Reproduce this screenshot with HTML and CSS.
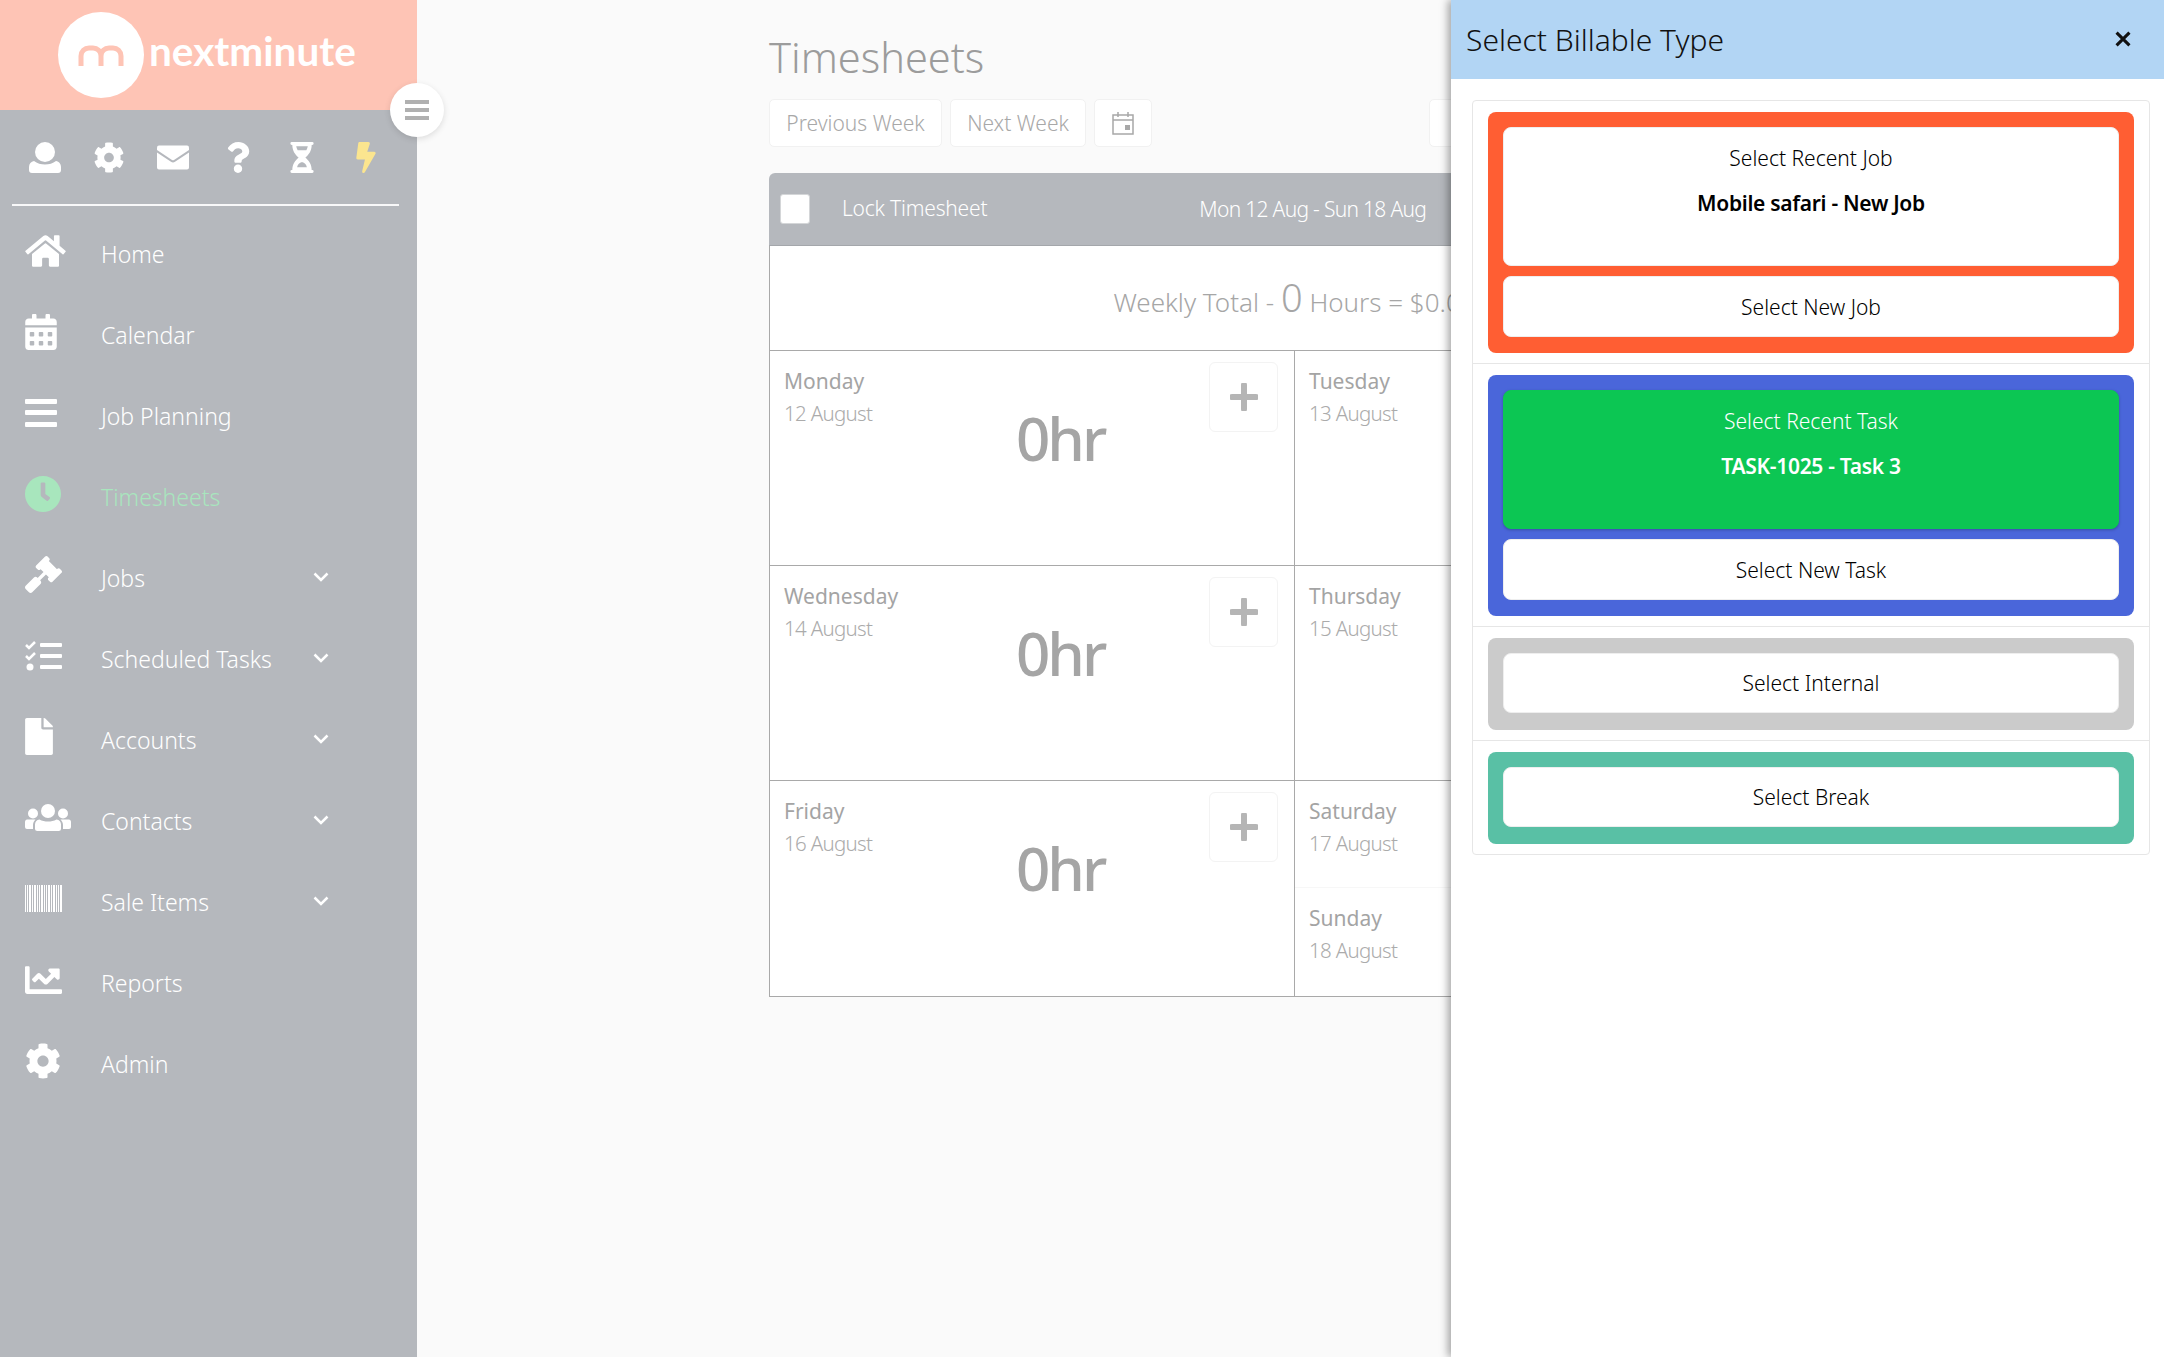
FILE: index.html
```html
<!DOCTYPE html>
<html lang="en">
<head>
<meta charset="utf-8">
<title>Timesheets</title>
<link rel="stylesheet" href="styles.css">
</head>
<body>
<aside class="sidebar">
  <div class="brand">
    <div class="brand-disc">
      <svg class="brand-mark" viewBox="0 0 46 22"><path d="M3 22V12a8 8 0 0 1 8-8h4a8 8 0 0 1 8 8v10M23 22V12a8 8 0 0 1 8-8h4a8 8 0 0 1 8 8v10" fill="none"/></svg>
    </div>
    <span class="brand-name">nextminute</span>
  </div>
  <button class="toggle" aria-label="Toggle menu"><svg viewBox="0 0 24 21"><rect width="24" height="4" y="0"/><rect width="24" height="4" y="8"/><rect width="24" height="4" y="16"/></svg></button>
  <div class="quick">
    <svg class="q q-user" viewBox="0 0 32 31"><circle cx="16" cy="10" r="10"/><path d="M5 19c3 2.500 7 3.500 11 3.500s8-1 11-3.500c3 .5 5 3 5 6v3a3 3 0 0 1-3 3H3a3 3 0 0 1-3-3v-3c0-3 2-5.500 5-6z"/></svg>
    <svg class="q q-cog" viewBox="0 0 512 512"><path d="M487.400 315.700l-42.600-24.600c4.300-23.200 4.300-47 0-70.200l42.600-24.600c4.900-2.800 7.100-8.600 5.500-14-11.100-35.600-30-67.800-54.700-94.600-3.800-4.100-10-5.100-14.800-2.300L380.800 110c-17.900-15.400-38.500-27.300-60.800-35.100V25.800c0-5.600-3.900-10.500-9.400-11.700-36.700-8.200-74.300-7.800-109.200 0-5.500 1.200-9.400 6.100-9.400 11.700V75c-22.200 7.900-42.800 19.800-60.800 35.100L88.700 85.500c-4.900-2.800-11-1.900-14.800 2.300-24.700 26.700-43.600 58.900-54.700 94.600-1.700 5.400.6 11.200 5.500 14L67.300 221c-4.300 23.200-4.300 47 0 70.200l-42.600 24.600c-4.900 2.800-7.100 8.600-5.500 14 11.100 35.600 30 67.800 54.700 94.600 3.800 4.100 10 5.100 14.800 2.300l42.600-24.600c17.900 15.400 38.500 27.300 60.800 35.100v49.200c0 5.600 3.900 10.500 9.400 11.700 36.700 8.200 74.300 7.800 109.200 0 5.500-1.200 9.400-6.100 9.400-11.700v-49.200c22.200-7.900 42.800-19.800 60.800-35.100l42.600 24.600c4.900 2.800 11 1.900 14.800-2.300 24.700-26.700 43.600-58.900 54.700-94.600 1.500-5.500-.7-11.300-5.600-14.100zM256 336c-44.100 0-80-35.900-80-80s35.900-80 80-80 80 35.900 80 80-35.900 80-80 80z"/></svg>
    <svg class="q q-mail" viewBox="0 0 32 24"><path d="M2 0h28a2 2 0 0 1 2 2v2.500L17 14.500a2 2 0 0 1-2 0L0 4.500V2a2 2 0 0 1 2-2z"/><path d="M0 7l14 9.300a4 4 0 0 0 4 0L32 7v15a2 2 0 0 1-2 2H2a2 2 0 0 1-2-2z"/></svg>
    <svg class="q q-help" viewBox="0 0 384 512"><path d="M202.021 0C122.202 0 70.503 32.703 29.914 91.026c-7.363 10.580-5.093 25.086 5.178 32.874l43.138 32.709c10.373 7.865 25.132 6.026 33.253-4.148 25.049-31.381 43.630-49.449 82.757-49.449 30.764 0 68.816 19.799 68.816 49.631 0 22.552-18.617 34.134-48.993 51.164-35.423 19.860-82.299 44.576-82.299 106.405V320c0 13.255 10.745 24 24 24h72.471c13.255 0 24-10.745 24-24v-5.773c0-42.860 125.268-44.645 125.268-160.627C377.504 66.256 286.902 0 202.021 0zM192 373.459c-38.196 0-69.271 31.075-69.271 69.271 0 38.195 31.075 69.270 69.271 69.270s69.271-31.075 69.271-69.271-31.075-69.270-69.271-69.270z"/></svg>
    <svg class="q q-glass" viewBox="0 0 24 32"><path fill-rule="evenodd" d="M1.500 0h21a1.500 1.500 0 0 1 0 3H22c0 6-3 10-6.500 13 3.500 3 6.500 7 6.500 13h.5a1.500 1.500 0 0 1 0 3h-21a1.500 1.500 0 0 1 0-3H2c0-6 3-10 6.500-13C5 13 2 9 2 3h-.5a1.500 1.500 0 0 1 0-3zM6 4.500c.3 1.500.8 2.800 1.500 4h9c.7-1.200 1.200-2.500 1.500-4zM12 21c-2.500 0-4.500 2.500-5 5h10c-.5-2.500-2.500-5-5-5z"/></svg>
    <svg class="q q-bolt" viewBox="0 0 320 512"><path d="M296 160H180.600l42.600-129.800C227.200 15 215.700 0 200 0H56C44 0 33.800 8.900 32.200 20.800l-32 240C-1.700 275.200 9.500 288 24 288h118.700L96.600 482.500c-3.600 15.200 8 29.500 23.300 29.500 8.400 0 16.400-4.400 20.800-12l176-304c9.300-15.900-2.200-36-20.700-36z"/></svg>
  </div>
  <hr class="rule">
  <nav class="nav">
    <a class="item"><span class="ico"><svg class="i-home" viewBox="0 0 576 512"><path d="M280.370 148.260L96 300.110V464a16 16 0 0 0 16 16l112.060-.29a16 16 0 0 0 15.920-16V368a16 16 0 0 1 16-16h64a16 16 0 0 1 16 16v95.640a16 16 0 0 0 16 16.050L464 480a16 16 0 0 0 16-16V300L295.670 148.260a12.190 12.190 0 0 0-15.300 0zM571.600 251.470L488 182.560V44.050a12 12 0 0 0-12-12h-56a12 12 0 0 0-12 12v72.610L318.470 43a48 48 0 0 0-61 0L4.340 251.470a12 12 0 0 0-1.600 16.900l25.500 31A12 12 0 0 0 45.150 301l235.220-193.740a12.190 12.190 0 0 1 15.300 0L530.900 301a12 12 0 0 0 16.900-1.600l25.500-31a12 12 0 0 0-1.700-16.930z"/></svg></span>Home</a>
    <a class="item"><span class="ico"><svg class="i-cal" viewBox="0 0 448 512"><path d="M0 464c0 26.500 21.500 48 48 48h352c26.500 0 48-21.500 48-48V192H0v272zm320-196c0-6.600 5.400-12 12-12h40c6.600 0 12 5.400 12 12v40c0 6.600-5.400 12-12 12h-40c-6.600 0-12-5.400-12-12v-40zm0 128c0-6.600 5.400-12 12-12h40c6.600 0 12 5.400 12 12v40c0 6.600-5.400 12-12 12h-40c-6.600 0-12-5.400-12-12v-40zM192 268c0-6.600 5.400-12 12-12h40c6.600 0 12 5.400 12 12v40c0 6.600-5.400 12-12 12h-40c-6.600 0-12-5.400-12-12v-40zm0 128c0-6.600 5.400-12 12-12h40c6.600 0 12 5.400 12 12v40c0 6.600-5.400 12-12 12h-40c-6.600 0-12-5.400-12-12v-40zM64 268c0-6.600 5.400-12 12-12h40c6.600 0 12 5.400 12 12v40c0 6.600-5.400 12-12 12H76c-6.600 0-12-5.400-12-12v-40zm0 128c0-6.600 5.400-12 12-12h40c6.600 0 12 5.400 12 12v40c0 6.600-5.400 12-12 12H76c-6.600 0-12-5.400-12-12v-40zM400 64h-48V16c0-8.800-7.200-16-16-16h-32c-8.800 0-16 7.200-16 16v48H160V16c0-8.800-7.200-16-16-16h-32c-8.800 0-16 7.200-16 16v48H48C21.500 64 0 85.500 0 112v48h448v-48c0-26.500-21.500-48-48-48z"/></svg></span>Calendar</a>
    <a class="item"><span class="ico"><svg class="i-bars" viewBox="0 0 32 28"><rect width="32" height="5" rx="1" y="0"/><rect width="32" height="5" rx="1" y="11"/><rect width="32" height="5" rx="1" y="23"/></svg></span>Job Planning</a>
    <a class="item item-active"><span class="ico"><svg class="i-clock" viewBox="8 8 496 496"><path d="M256 8C119 8 8 119 8 256s111 248 248 248 248-111 248-248S393 8 256 8zm92.490 313l-20 25a16 16 0 0 1-22.490 2.500l-67-49.720a40 40 0 0 1-15-31.230V112a16 16 0 0 1 16-16h32a16 16 0 0 1 16 16v144l58 42.500a16 16 0 0 1 2.490 22.500z"/></svg></span>Timesheets</a>
    <a class="item"><span class="ico"><svg class="i-gavel" viewBox="0 0 512 512"><path d="M504.971 199.362l-22.627-22.627c-9.373-9.373-24.569-9.373-33.941 0l-5.657 5.657L329.608 69.255l5.657-5.657c9.373-9.373 9.373-24.569 0-33.941L312.638 7.029c-9.373-9.373-24.569-9.373-33.941 0L154.246 131.480c-9.373 9.373-9.373 24.569 0 33.941l22.627 22.627c9.373 9.373 24.569 9.373 33.941 0l5.657-5.657 39.598 39.598-81.040 81.040-5.657-5.657c-12.497-12.497-32.758-12.497-45.255 0L9.373 412.118c-12.497 12.497-12.497 32.758 0 45.255l45.255 45.255c12.497 12.497 32.758 12.497 45.255 0l114.745-114.745c12.497-12.497 12.497-32.758 0-45.255l-5.657-5.657 81.040-81.040 39.598 39.598-5.657 5.657c-9.373 9.373-9.373 24.569 0 33.941l22.627 22.627c9.373 9.373 24.569 9.373 33.941 0l124.451-124.451c9.372-9.372 9.372-24.568 0-33.941z"/></svg></span>Jobs<svg class="chev" viewBox="0 0 16 10"><path d="M1.500 1.500L8 8l6.500-6.500" fill="none"/></svg></a>
    <a class="item"><span class="ico"><svg class="i-tasks" viewBox="0 0 37 30"><rect x="15" y="2" width="22" height="4" rx="1"/><rect x="15" y="13" width="22" height="4" rx="1"/><rect x="15" y="24" width="22" height="4" rx="1"/><circle cx="5" cy="26" r="3.500"/><path class="tick" d="M1 4l3 3 6-6M1 15l3 3 6-6" fill="none"/></svg></span>Scheduled Tasks<svg class="chev" viewBox="0 0 16 10"><path d="M1.500 1.500L8 8l6.500-6.500" fill="none"/></svg></a>
    <a class="item"><span class="ico"><svg class="i-file" viewBox="0 0 384 512"><path d="M224 136V0H24C10.700 0 0 10.700 0 24v464c0 13.300 10.700 24 24 24h336c13.300 0 24-10.700 24-24V160H248c-13.200 0-24-10.800-24-24zm160-14.100v6.100H256V0h6.100c6.400 0 12.500 2.500 17 7l97.900 98c4.500 4.500 7 10.600 7 16.900z"/></svg></span>Accounts<svg class="chev" viewBox="0 0 16 10"><path d="M1.500 1.500L8 8l6.500-6.500" fill="none"/></svg></a>
    <a class="item"><span class="ico"><svg class="i-users" viewBox="0 0 46 27"><circle cx="8" cy="9.500" r="5"/><circle cx="38" cy="9.500" r="5"/><circle cx="23" cy="7" r="7"/><path d="M2 15.500h8.500c-1.500 1.500-2.500 3.500-2.500 5.500v4H2a2 2 0 0 1-2-2v-5c0-1.500 1-2.500 2-2.500zM35.500 15.500H44c1 0 2 1 2 2.500v5a2 2 0 0 1-2 2h-6v-4c0-2-1-4-2.500-5.500zM14.500 15.500c2.500 1.500 5.500 2 8.500 2s6-.5 8.500-2c3 .3 4.500 2.500 4.500 5v4a2.500 2.500 0 0 1-2.500 2.500h-21a2.500 2.500 0 0 1-2.500-2.500v-4c0-2.500 1.500-4.700 4.500-5z"/></svg></span>Contacts<svg class="chev" viewBox="0 0 16 10"><path d="M1.500 1.500L8 8l6.500-6.500" fill="none"/></svg></a>
    <a class="item"><span class="ico"><svg class="i-code" viewBox="0 0 37 27"><path d="M0 0h1v27H0zM2 0h1v27H2zM4 0h2v27H4zM7 0h1v27H7zM9 0h2v27H9zM12 0h1v27h-1zM14 0h1v27h-1zM16 0h2v27h-2zM19 0h1v27h-1zM21 0h1v27h-1zM23 0h2v27h-2zM26 0h1v27h-1zM28 0h2v27h-2zM31 0h1v27h-1zM33 0h1v27h-1zM35 0h2v27h-2z"/></svg></span>Sale Items<svg class="chev" viewBox="0 0 16 10"><path d="M1.500 1.500L8 8l6.500-6.500" fill="none"/></svg></a>
    <a class="item"><span class="ico"><svg class="i-chart" viewBox="0 64 512 384"><path d="M496 384H64V80c0-8.840-7.160-16-16-16H16C7.160 64 0 71.160 0 80v336c0 17.670 14.330 32 32 32h464c8.840 0 16-7.160 16-16v-32c0-8.840-7.160-16-16-16zM464 96H345.940c-21.380 0-32.090 25.850-16.970 40.970l32.400 32.400L288 242.750l-73.370-73.370c-12.500-12.500-32.760-12.500-45.250 0l-68.690 68.690c-6.250 6.250-6.250 16.380 0 22.630l22.620 22.620c6.250 6.250 16.380 6.250 22.630 0L192 237.250l73.370 73.370c12.500 12.500 32.760 12.500 45.250 0l96-96 32.400 32.400c15.120 15.120 40.970 4.410 40.970-16.970V112c0-8.840-7.160-16-16-16z"/></svg></span>Reports</a>
    <a class="item"><span class="ico"><svg class="i-admin" viewBox="0 0 512 512"><path d="M487.400 315.700l-42.600-24.600c4.300-23.200 4.300-47 0-70.200l42.600-24.600c4.900-2.800 7.100-8.600 5.500-14-11.100-35.600-30-67.800-54.700-94.600-3.800-4.100-10-5.100-14.800-2.300L380.800 110c-17.900-15.400-38.500-27.300-60.800-35.100V25.800c0-5.600-3.900-10.500-9.400-11.700-36.700-8.200-74.300-7.800-109.200 0-5.500 1.200-9.400 6.100-9.400 11.700V75c-22.200 7.900-42.800 19.800-60.800 35.100L88.700 85.500c-4.900-2.800-11-1.900-14.800 2.300-24.700 26.700-43.600 58.900-54.700 94.600-1.700 5.400.6 11.200 5.500 14L67.300 221c-4.300 23.200-4.300 47 0 70.200l-42.600 24.600c-4.900 2.800-7.100 8.600-5.500 14 11.100 35.600 30 67.800 54.700 94.600 3.800 4.100 10 5.100 14.800 2.300l42.600-24.600c17.900 15.400 38.500 27.300 60.800 35.100v49.200c0 5.600 3.900 10.500 9.400 11.700 36.700 8.200 74.300 7.800 109.200 0 5.500-1.200 9.400-6.100 9.400-11.700v-49.200c22.200-7.900 42.800-19.800 60.800-35.100l42.600 24.600c4.900 2.800 11 1.900 14.800-2.300 24.700-26.700 43.600-58.900 54.700-94.600 1.500-5.500-.7-11.300-5.600-14.100zM256 336c-44.100 0-80-35.900-80-80s35.900-80 80-80 80 35.900 80 80-35.900 80-80 80z"/></svg></span>Admin</a>
  </nav>
</aside>

<main class="main">
  <h1 class="title">Timesheets</h1>
  <div class="toolbar">
    <button class="btn btn-prev">Previous Week</button>
    <button class="btn btn-next">Next Week</button>
    <button class="btn btn-cal" aria-label="Pick date"><svg viewBox="0 0 22 24"><path d="M1 4h20v19H1zM1 9h20M6 1v5M16 1v5" fill="none"/><rect class="dot" x="13" y="14" width="5" height="5"/></svg></button>
    <button class="btn btn-far">New Entry</button>
  </div>
  <section class="sheet">
    <header class="sheet-head">
      <span class="check"></span>
      <span class="lock">Lock Timesheet</span>
      <span class="range">Mon 12 Aug - Sun 18 Aug</span>
    </header>
    <div class="total">Weekly Total - <b class="zero">0</b> Hours = $0.00</div>
    <div class="days">
      <div class="day">
        <p class="dname">Monday</p><p class="ddate">12 August</p>
        <button class="add" aria-label="Add"><svg viewBox="0 0 28 28"><path d="M14 2v24M2 14h24"/></svg></button>
        <p class="hours">0hr</p>
      </div>
      <div class="day">
        <p class="dname">Tuesday</p><p class="ddate">13 August</p>
      </div>
      <div class="day">
        <p class="dname">Wednesday</p><p class="ddate">14 August</p>
        <button class="add" aria-label="Add"><svg viewBox="0 0 28 28"><path d="M14 2v24M2 14h24"/></svg></button>
        <p class="hours">0hr</p>
      </div>
      <div class="day">
        <p class="dname">Thursday</p><p class="ddate">15 August</p>
      </div>
      <div class="day">
        <p class="dname">Friday</p><p class="ddate">16 August</p>
        <button class="add" aria-label="Add"><svg viewBox="0 0 28 28"><path d="M14 2v24M2 14h24"/></svg></button>
        <p class="hours">0hr</p>
      </div>
      <div class="day day-split">
        <div class="half"><p class="dname">Saturday</p><p class="ddate">17 August</p></div>
        <div class="half half-b"><p class="dname">Sunday</p><p class="ddate">18 August</p></div>
      </div>
    </div>
  </section>
</main>

<section class="panel">
  <header class="panel-head">
    <h2 class="panel-title">Select Billable Type</h2>
    <svg class="close" viewBox="0 0 14 14"><path d="M2 2l10 10M12 2L2 12"/></svg>
  </header>
  <div class="choices">
    <div class="choice">
      <div class="group group-job">
        <button class="pick pick-tall"><span>Select Recent Job</span><strong>Mobile safari - New Job</strong></button>
        <button class="pick">Select New Job</button>
      </div>
    </div>
    <div class="choice">
      <div class="group group-task">
        <button class="pick pick-tall pick-on"><span>Select Recent Task</span><strong>TASK-1025 - Task 3</strong></button>
        <button class="pick">Select New Task</button>
      </div>
    </div>
    <div class="choice">
      <div class="group group-plain group-internal"><button class="pick pick-plain">Select Internal</button></div>
    </div>
    <div class="choice">
      <div class="group group-plain group-break"><button class="pick pick-plain">Select Break</button></div>
    </div>
  </div>
</section>
</body>
</html>
```

FILE: styles.css
```css
* { box-sizing: border-box; }
html, body { margin: 0; height: 100%; }
body {
  width: 2164px;
  height: 1357px;
  overflow: hidden;
  display: flex;
  position: relative;
  background: #fafafa;
  font-family: "Noto Sans", "Open Sans", sans-serif;
  color: #a6a6a6;
}
p, h1, h2 { margin: 0; font-weight: 400; }
button { font-family: inherit; cursor: pointer; }

/* Sidebar */
.sidebar {
  position: relative;
  flex: 0 0 417px;
  height: 100%;
  background: #b5b8bd;
  color: #fff;
}
.brand {
  height: 110px;
  background: #fec4b5;
  display: flex;
  align-items: center;
  padding-left: 58px;
  gap: 5px;
}
.brand-disc {
  width: 86px;
  height: 86px;
  border-radius: 50%;
  background: #fff;
  display: flex;
  align-items: center;
  justify-content: center;
}
.brand-mark { width: 46px; height: 22px; margin-top: -1px; }
.brand-mark path { stroke: #fec4b5; stroke-width: 5; }
.brand-name {
  font-family: Lato, sans-serif;
  font-size: 40.5px;
  font-weight: 700;
  line-height: 1;
  margin-top: -7px;
}
.toggle {
  position: absolute;
  left: 390px;
  top: 83px;
  width: 54px;
  height: 54px;
  padding: 0;
  border: 0;
  border-radius: 50%;
  background: #fff;
  box-shadow: 0 2px 6px rgba(0,0,0,.12);
  display: flex;
  align-items: center;
  justify-content: center;
}
.toggle svg { width: 24px; height: 21px; fill: #b0b0b0; }
.quick {
  height: 94px;
  padding: 0 35px 0 29px;
  display: flex;
  align-items: center;
  justify-content: space-between;
}
.q { fill: #fff; height: 31px; width: 32px; }
.q-bolt { fill: #fbe58f; }
.rule { margin: 0 18px 0 12px; border: 0; border-top: 2px solid #fff; opacity: .9; }
.nav { display: flex; flex-direction: column; padding-top: 7px; }
.item {
  height: 81px;
  display: flex;
  align-items: center;
  padding-left: 25px;
  font-size: 23px;
  font-weight: 300;
  color: #fff;
}
.item-active { color: #a8e6bd; }
.ico { flex: 0 0 76px; display: flex; align-items: center; height: 40px; margin-bottom: 6px; }
.ico svg { fill: #fff; display: block; }
.item-active .ico svg { fill: #a8e6bd; }
.i-home { width: 41px; height: 36px; }
.i-cal { width: 32px; height: 36px; }
.i-bars { width: 32px; height: 28px; }
.i-clock { width: 36px; height: 36px; }
.i-gavel { width: 37px; height: 37px; }
.i-tasks { width: 37px; height: 30px; }
.tick { stroke: #fff; stroke-width: 2.500; }
.i-file { width: 28px; height: 37px; }
.i-users { width: 46px; height: 27px; }
.i-code { width: 37px; height: 27px; }
.i-chart { width: 37px; height: 28px; }
.i-admin { width: 36px; height: 36px; }
.chev { width: 16px; height: 10px; margin-left: auto; margin-right: 88px; margin-bottom: 2px; }
.chev path { stroke: #fff; stroke-width: 2.500; }

/* Main */
.main { flex: 1; padding-left: 352px; min-width: 0; }
.title {
  font-size: 41.5px;
  font-weight: 300;
  line-height: 58px;
  padding-top: 28px;
  height: 99px;
  color: #9c9c9c;
}
.toolbar { display: flex; gap: 8px; width: 1050px; height: 48px; }
.btn {
  height: 48px;
  padding: 0;
  border: 1px solid #f1f1f1;
  border-radius: 5px;
  background: #fff;
  font-size: 21px;
  font-weight: 300;
  color: #a8a8a8;
}
.btn-prev { width: 173px; }
.btn-next { width: 136px; }
.btn-cal { width: 58px; display: flex; align-items: center; justify-content: center; }
.btn-cal svg { width: 22px; height: 24px; }
.btn-cal path { stroke: #a8a8a8; stroke-width: 1.500; }
.dot { fill: #a8a8a8; }
.btn-far { margin-left: 269px; width: 180px; }

.sheet { margin-top: 26px; width: 1050px; }
.sheet-head {
  height: 73px;
  background: #b5b8bd;
  border-radius: 6px 6px 0 0;
  border-bottom: 1px solid #a4a7ab;
  display: flex;
  align-items: center;
  padding-left: 11px;
  color: #fff;
  font-size: 21px;
  font-weight: 300;
}
.check {
  width: 30px;
  height: 30px;
  background: #fff;
  border: 1px solid #d4d6d8;
  border-radius: 3px;
}
.lock { margin-left: 32px; letter-spacing: -.2px; margin-top: -2px; }
.range { margin-left: 212px; letter-spacing: -.7px; }
.total {
  height: 105px;
  padding-top: 1px;
  background: #fff;
  border-left: 1px solid #a9a9a9;
  border-bottom: 1px solid #a9a9a9;
  line-height: 100px;
  text-align: center;
  font-size: 26px;
  font-weight: 300;
  color: #a6a6a6;
}
.zero { font-size: 38px; font-weight: 300; }
.days { display: grid; grid-template-columns: 525px 525px; grid-auto-rows: 215.200px; background: #fff; }
.day {
  position: relative;
  padding: 14px 14px 0;
  border-left: 1px solid #a9a9a9;
  border-bottom: 1px solid #a9a9a9;
}
.dname { font-size: 21px; line-height: 32px; color: #a4a4a4; }
.ddate { font-size: 20.500px; font-weight: 300; line-height: 33px; letter-spacing: -.7px; color: #ababab; }
.add {
  position: absolute;
  top: 11px;
  right: 16px;
  width: 69px;
  height: 70px;
  padding: 0;
  border: 1px solid #f3f3f3;
  border-radius: 6px;
  background: #fff;
  display: flex;
  align-items: center;
  justify-content: center;
}
.add svg { width: 28px; height: 28px; }
.add path { stroke: #b5b5b5; stroke-width: 6; stroke-linecap: round; }
.hours {
  position: absolute;
  left: 246px;
  top: 45px;
  font-size: 60px;
  font-weight: 500;
  line-height: 84px;
  letter-spacing: -3px;
  color: #a5a5a5;
}
.day-split { padding: 0; }
.half { height: 107px; padding: 14px 14px 0; border-bottom: 1px solid #f7f7f7; }
.half-b { border-bottom: 0; }

/* Panel */
.panel {
  position: absolute;
  top: 0;
  right: 0;
  bottom: 0;
  width: 713px;
  background: #fff;
  box-shadow: -3px 0 8px rgba(0,0,0,.35);
  color: #000;
}
.panel-head {
  height: 79px;
  background: #b2d5f4;
  display: flex;
  align-items: center;
  justify-content: space-between;
  padding: 0 32px 0 15px;
}
.panel-title { font-size: 30px; font-weight: 300; color: #111; }
.close { width: 18px; height: 18px; margin-top: -2px; }
.close path { stroke: #111; stroke-width: 2.400; fill: none; }
.choices {
  margin: 21px 14px 0 21px;
  border: 1px solid #e6e6e6;
  border-radius: 4px;
}
.choice { padding: 11px 15px 10px; border-bottom: 1px solid #e6e6e6; }
.choice:last-child { border-bottom: 0; }
.group {
  display: flex;
  flex-direction: column;
  gap: 10px;
  padding: 15px 15px 16px;
  border-radius: 8px;
}
.group-job { background: #ff5e33; }
.group-task { background: #4a66da; }
.group-internal { background: #cbcbcb; }
.group-break { background: #59c0a5; }
.group-plain { padding-bottom: 17px; }
.pick {
  width: 100%;
  height: 61px;
  padding: 0;
  border: 1px solid #eee;
  border-radius: 8px;
  background: #fff;
  color: #000;
  font-size: 21px;
  font-weight: 300;
}
.pick-plain { height: 60px; }
.pick-tall {
  height: 139px;
  display: flex;
  flex-direction: column;
  align-items: center;
  padding-top: 16px;
  gap: 16px;
}
.pick-tall span { line-height: 29px; }
.pick-tall strong { font-weight: 600; line-height: 29px; letter-spacing: -.3px; }
.pick-on {
  background: #0cc653;
  border-color: #0cc653;
  color: #fff;
  box-shadow: 0 1px 3px rgba(0,0,0,.25);
}
```
